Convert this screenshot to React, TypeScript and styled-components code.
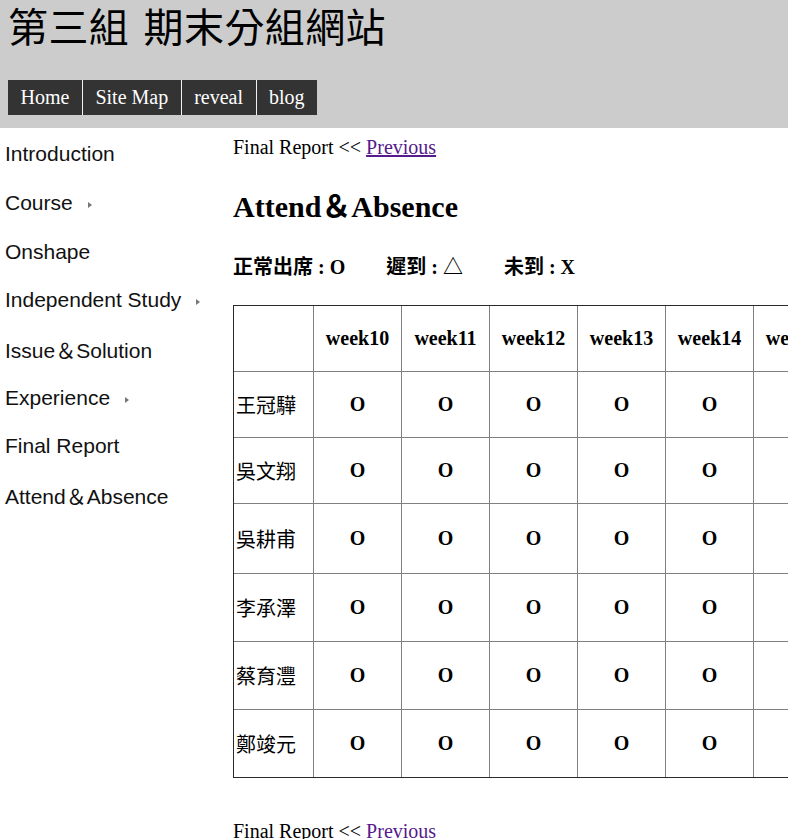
import styled, { createGlobalStyle } from "styled-components";

const GlobalStyle = createGlobalStyle`
  html, body {
    margin: 0;
    padding: 0;
    overflow: hidden;
    background: #fff;
  }
  body {
    font-family: "Liberation Serif", "Noto Sans CJK TC", serif;
    font-size: 20px;
    color: #000;
  }
`;

const Page = styled.div`
  width: 788px;
  height: 839px;
  overflow: hidden;
`;

const Header = styled.header`
  background-color: #ccc;
  height: 128px;
  box-sizing: border-box;
  padding: 5px 8px 0;
`;

const SiteTitle = styled.h1`
  margin: 0;
  font-family: "Liberation Serif", "Noto Sans CJK TC", serif;
  font-weight: normal;
  font-size: 40px;
  line-height: 48px;
  letter-spacing: 0.4px;
  word-spacing: 4px;
  color: #000;
`;

const Nav = styled.ul`
  display: flex;
  list-style: none;
  margin: 27px 0 0;
  padding: 0;
`;

const NavItem = styled.li`
  background-color: #333;
  color: #fff;
  height: 35px;
  line-height: 35px;
  padding: 0 12.5px;
  font-size: 20px;
  border-left: 1px solid #f2f2f2;
  &:first-child {
    border-left: none;
  }
`;

const Body = styled.div`
  display: flex;
`;

const Sidebar = styled.ul`
  list-style: none;
  margin: 0;
  padding: 2px 0 0 5px;
  width: 228px;
  flex-shrink: 0;
`;

const SideItem = styled.li`
  display: flex;
  align-items: center;
  height: 48.7px;
  font-family: "Liberation Sans", "Noto Sans CJK TC", sans-serif;
  font-size: 21px;
  color: #111;
  white-space: nowrap;
`;

const Caret = styled.span`
  display: inline-block;
  width: 0;
  height: 0;
  margin-left: 15px;
  margin-top: 4px;
  border-top: 3.5px solid transparent;
  border-bottom: 3.5px solid transparent;
  border-left: 4px solid #777;
`;

const Content = styled.main`
  flex: 1;
  min-width: 0;
  padding-top: 8px;
`;

const Crumb = styled.p<{ $top?: number }>`
  margin: ${(p) => p.$top ?? 0}px 0 0;
  line-height: 23px;
  white-space: nowrap;
  a {
    color: #551a8b;
  }
`;

const Heading = styled.h2`
  margin: 30px 0 0;
  font-size: 30px;
  line-height: 35px;
  font-weight: bold;
  white-space: nowrap;
`;

const Legend = styled.p`
  display: flex;
  gap: 41px;
  margin: 32px 0 0;
  font-weight: bold;
  line-height: 23px;
  white-space: nowrap;
`;

const Table = styled.table`
  margin-top: 26px;
  border-collapse: separate;
  border-spacing: 0;
  border: 1px solid #2a2a2a;
  table-layout: fixed;
  width: max-content;
`;

const Cell = styled.td<{ $first?: boolean; $lastRow?: boolean }>`
  box-sizing: border-box;
  width: ${(p) => (p.$first ? 80 : 88)}px;
  padding: ${(p) => (p.$first ? "0 0 0 2px" : "0")};
  border-right: 1px solid #808080;
  border-bottom: ${(p) => (p.$lastRow ? "none" : "1px solid #808080")};
  text-align: ${(p) => (p.$first ? "left" : "center")};
  vertical-align: middle;
  font-weight: ${(p) => (p.$first ? "normal" : "bold")};
  font-family: ${(p) =>
    p.$first
      ? `"Noto Sans CJK TC", serif`
      : `"Liberation Serif", "Noto Sans CJK TC", serif`};
  font-size: 20px;
  white-space: nowrap;
`;

const weeks = ["week10", "week11", "week12", "week13", "week14", "week15", "week16", "week17"];

const students = [
  { name: "王冠驊", height: 66 },
  { name: "吳文翔", height: 66 },
  { name: "吳耕甫", height: 70 },
  { name: "李承澤", height: 68 },
  { name: "蔡育灃", height: 68 },
  { name: "鄭竣元", height: 67 },
];

const menu = [
  { label: "Introduction" },
  { label: "Course", sub: true },
  { label: "Onshape" },
  { label: "Independent Study", sub: true },
  { label: "Issue＆Solution" },
  { label: "Experience", sub: true },
  { label: "Final Report" },
  { label: "Attend＆Absence" },
];

export default function App() {
  const last = students.length - 1;
  return (
    <Page>
      <GlobalStyle />
      <Header>
        <SiteTitle>第三組 期末分組網站</SiteTitle>
        <Nav>
          <NavItem>Home</NavItem>
          <NavItem>Site Map</NavItem>
          <NavItem>reveal</NavItem>
          <NavItem>blog</NavItem>
        </Nav>
      </Header>
      <Body>
        <Sidebar>
          {menu.map((m) => (
            <SideItem key={m.label}>
              {m.label}
              {m.sub && <Caret />}
            </SideItem>
          ))}
        </Sidebar>
        <Content>
          <Crumb>
            Final Report &lt;&lt; <a href="#">Previous</a>
          </Crumb>
          <Heading>Attend＆Absence</Heading>
          <Legend>
            <span>正常出席 : O</span>
            <span>遲到 : △</span>
            <span>未到 : X</span>
          </Legend>
          <Table>
            <tbody>
              <tr style={{ height: 66 }}>
                <Cell $first />
                {weeks.map((w) => (
                  <Cell key={w}>{w}</Cell>
                ))}
              </tr>
              {students.map((s, i) => (
                <tr key={s.name} style={{ height: s.height }}>
                  <Cell $first $lastRow={i === last}>
                    {s.name}
                  </Cell>
                  {weeks.map((w, j) => (
                    <Cell key={w} $lastRow={i === last}>
                      {j < 5 ? "O" : ""}
                    </Cell>
                  ))}
                </tr>
              ))}
            </tbody>
          </Table>
          <Crumb $top={42}>
            Final Report &lt;&lt; <a href="#">Previous</a>
          </Crumb>
        </Content>
      </Body>
    </Page>
  );
}
